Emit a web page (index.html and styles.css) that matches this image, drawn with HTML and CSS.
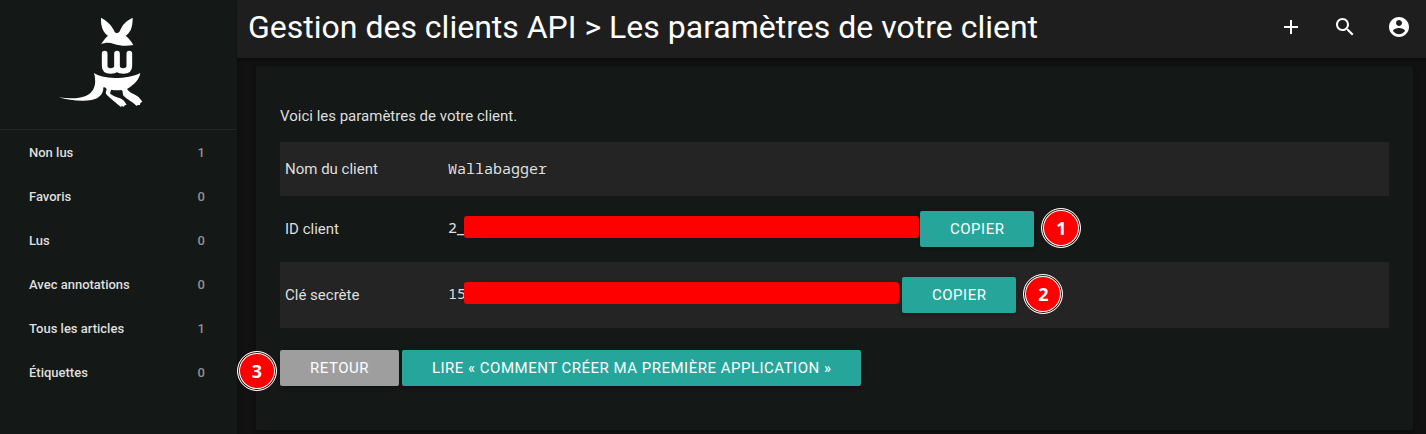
FILE: index.html
```html
<!DOCTYPE html>
<html lang="fr">
<head>
<meta charset="utf-8">
<title>Gestion des clients API</title>
<link rel="stylesheet" href="styles.css">
</head>
<body>
<div class="layout">
  <aside class="sidebar">
    <a class="logo" href="#" aria-label="wallabag">
      <svg viewBox="54 51 258 273" width="86" height="91" aria-hidden="true">
        <g fill="#fff">
          <path d="M183 53C199 61 212 73 219 86C224 93 223 96 227 98C230 99 234 99 237 97C240 94 240 90 244 84C250 70 264 60 278 53C278 69 276 88 266 99C263 103 260 105 257 107C265 112 274 124 280 135C261 139 240 138 222 132C208 127 195 127 183 133C189 124 196 113 204 107C189 98 182 78 183 53Z"/>
          <path d="M162 219C174 228 197 233 224 234C256 234 281 229 301 219C298 237 285 253 261 267C267 277 277 280 290 287C298 292 303 299 307 305L301 309L300 315L293 315L290 318C279 307 263 299 252 289C246 283 251 276 245 270C236 271 223 271 213 269C213 273 211 277 210 280C215 288 238 293 248 299C253 303 257 309 260 314L254 316L252 320L245 318L243 321C232 312 208 294 199 283C194 278 203 269 198 265C196 262 191 261 190 263C190 283 176 295 155 300C126 305 87 301 56 292C84 296 116 297 137 288C158 279 168 259 165 236C165 229 163 224 162 219Z"/>
        </g>
        <path d="M194 161V198Q194 213 212 213Q231 213 231 198V161M231 198Q231 213 250 213Q268 213 268 198V161" fill="none" stroke="#fff" stroke-width="17" stroke-linecap="round"/>
      </svg>
    </a>
    <nav class="menu">
      <a href="#">Non lus <span class="count">1</span></a>
      <a href="#">Favoris <span class="count">0</span></a>
      <a href="#">Lus <span class="count">0</span></a>
      <a href="#">Avec annotations <span class="count">0</span></a>
      <a href="#">Tous les articles <span class="count">1</span></a>
      <a href="#">Étiquettes <span class="count">0</span></a>
    </nav>
  </aside>
  <div class="page">
    <header class="topbar">
      <h1>Gestion des clients API &gt; Les paramètres de votre client</h1>
      <div class="actions">
        <button type="button" aria-label="Ajouter"><svg viewBox="0 0 24 24"><path d="M19 13h-6v6h-2v-6H5v-2h6V5h2v6h6v2z"/></svg></button>
        <button type="button" aria-label="Rechercher"><svg viewBox="0 0 24 24"><path d="M15.5 14h-.79l-.28-.27C15.41 12.59 16 11.11 16 9.500 16 5.910 13.090 3 9.500 3S3 5.910 3 9.500 5.910 16 9.500 16c1.610 0 3.090-.59 4.230-1.570l.27.28v.79l5 4.990L20.490 19l-4.990-5zm-6 0C7.010 14 5 11.990 5 9.500S7.010 5 9.500 5 14 7.010 14 9.500 11.990 14 9.500 14z"/></svg></button>
        <button type="button" aria-label="Mon compte"><svg viewBox="0 0 24 24"><path d="M12 2C6.480 2 2 6.480 2 12s4.480 10 10 10 10-4.480 10-10S17.520 2 12 2zm0 3c1.660 0 3 1.340 3 3s-1.340 3-3 3-3-1.340-3-3 1.340-3 3-3zm0 14.200c-2.500 0-4.710-1.280-6-3.220.03-1.990 4-3.080 6-3.080 1.990 0 5.970 1.090 6 3.080-1.290 1.940-3.500 3.220-6 3.220z"/></svg></button>
      </div>
    </header>
    <main class="card">
      <p class="intro">Voici les paramètres de votre client.</p>
      <table class="params">
        <tbody>
          <tr class="row-name"><th scope="row">Nom du client</th><td><code>Wallabagger</code></td></tr>
          <tr><th scope="row">ID client</th><td><div class="value"><code>2_</code><span class="mask mask-id"></span><button class="btn" type="button">Copier</button><span class="step">1</span></div></td></tr>
          <tr><th scope="row">Clé secrète</th><td><div class="value"><code>15</code><span class="mask mask-secret"></span><button class="btn" type="button">Copier</button><span class="step">2</span></div></td></tr>
        </tbody>
      </table>
      <div class="links">
        <span class="step step-back">3</span>
        <a class="btn btn-grey" href="#">Retour</a>
        <a class="btn" href="#">Lire « Comment créer ma première application »</a>
      </div>
    </main>
  </div>
</div>
</body>
</html>
```
FILE: styles.css
```css
* { box-sizing: border-box; }

body {
  margin: 0;
  background: #111;
  color: #dfdfdf;
  font: 15px/22px Roboto, sans-serif;
}

a { color: inherit; text-decoration: none; }

.layout { display: flex; min-height: 100vh; }

.sidebar {
  flex: 0 0 237px;
  background: #141817;
  box-shadow: 0 2px 2px rgba(0, 0, 0, .14), 0 1px 5px rgba(0, 0, 0, .12);
}

.logo {
  display: flex;
  justify-content: center;
  padding: 17px 36px 21px 0;
  border-bottom: 1px solid #222625;
}

.menu { padding-top: 1px; }

.menu a {
  display: flex;
  justify-content: space-between;
  padding: 0 32px 0 29px;
  font-size: 13px;
  font-weight: 500;
  line-height: 44px;
}

.count { color: #909291; }

.page { flex: 1; min-width: 0; }

.topbar {
  display: flex;
  align-items: center;
  justify-content: space-between;
  height: 58px;
  padding: 0 15px 4px 11px;
  background: #1e1e1e;
  box-shadow: 0 2px 2px rgba(0, 0, 0, .3);
}

.topbar h1 {
  margin: 0;
  color: #fff;
  font-size: 32px;
  font-weight: 400;
  line-height: 54px;
}

.actions { display: flex; gap: 30px; }

.actions button {
  display: flex;
  padding: 0;
  border: 0;
  background: none;
}

.actions svg { width: 24px; height: 24px; fill: #fff; }

.card {
  margin: 8px 13px 4px 19px;
  padding: 39px 24px 44px;
  border-radius: 2px;
  background: #141817;
  box-shadow: 0 2px 2px rgba(0, 0, 0, .14), 0 1px 5px rgba(0, 0, 0, .2);
}

.intro { margin: 0 0 15px; }

.params { width: 100%; border-collapse: collapse; }

.params th,
.params td { padding: 15px 5px; text-align: left; font-weight: 400; }

.params th { width: 163px; }

.params .row-name th,
.params .row-name td { padding: 16px 5px; vertical-align: baseline; }

.params tr:nth-child(odd) { background: #242424; }

code { font: 15px/20px "Noto Sans Mono", "DejaVu Sans Mono", monospace; }

.value { display: flex; align-items: flex-start; }

.value code { line-height: 32px; }

.mask {
  height: 22px;
  margin: 5px 0 0 -2px;
  border-radius: 3px;
  background: #f00;
}

.mask-id { width: 455px; margin-right: 1px; }
.mask-secret { width: 435px; margin-right: 3px; }

.btn {
  height: 36px;
  padding: 0 30px;
  border: 0;
  border-radius: 2px;
  background: #26a69a;
  color: #fff;
  font: 15px/36px Roboto, sans-serif;
  letter-spacing: .5px;
  text-transform: uppercase;
  box-shadow: 0 2px 2px rgba(0, 0, 0, .14), 0 1px 5px rgba(0, 0, 0, .12);
}

.btn-grey { background: #9e9e9e; }

.step {
  width: 40px;
  height: 40px;
  margin: -3px 0 -1px 7px;
  border: 1px solid #fff;
  border-radius: 50%;
  background: #f00;
  box-shadow: inset 0 0 0 1px #111, inset 0 0 0 2px #fff;
  color: #fff;
  font: 700 18px/38px "Open Sans", sans-serif;
  text-align: center;
}

.links {
  display: flex;
  gap: 3px;
  position: relative;
  margin-top: 22px;
}

.step-back { position: absolute; top: 1px; left: -43px; margin: 0; }
```
